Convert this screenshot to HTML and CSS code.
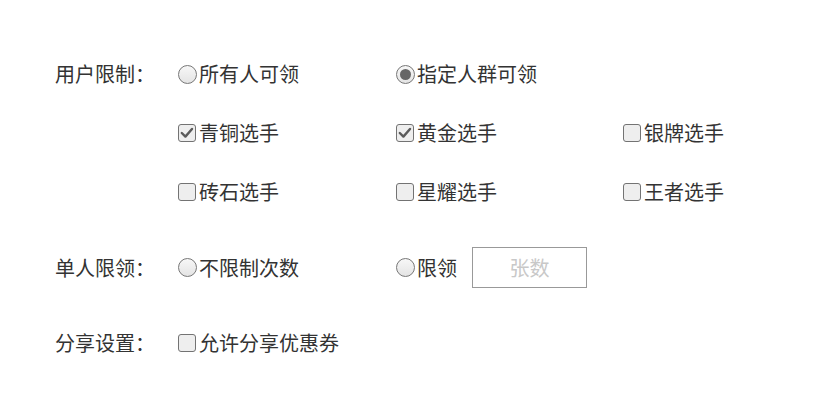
FILE: index.html
```html
<!DOCTYPE html>
<html lang="zh-CN">
<head>
<meta charset="utf-8">
<title>优惠券设置</title>
<link rel="stylesheet" href="styles.css">
</head>
<body>
<div class="form">
  <div class="row row-top">
    <div class="label">用户限制：</div>
    <div class="options">
      <label class="opt"><span class="radio"></span><span class="txt">所有人可领</span></label>
      <label class="opt"><span class="radio checked"></span><span class="txt">指定人群可领</span></label>
      <span></span>
      <label class="opt"><span class="check checked"><svg viewBox="0 0 18 18" width="18" height="18"><path d="M3.8 9 L7.4 12.6 L14 5" fill="none" stroke="#5a5a5a" stroke-width="2.4" stroke-linecap="round" stroke-linejoin="round"/></svg></span><span class="txt">青铜选手</span></label>
      <label class="opt"><span class="check checked"><svg viewBox="0 0 18 18" width="18" height="18"><path d="M3.8 9 L7.4 12.6 L14 5" fill="none" stroke="#5a5a5a" stroke-width="2.4" stroke-linecap="round" stroke-linejoin="round"/></svg></span><span class="txt">黄金选手</span></label>
      <label class="opt"><span class="check"></span><span class="txt">银牌选手</span></label>
      <label class="opt"><span class="check"></span><span class="txt">砖石选手</span></label>
      <label class="opt"><span class="check"></span><span class="txt">星耀选手</span></label>
      <label class="opt"><span class="check"></span><span class="txt">王者选手</span></label>
    </div>
  </div>
  <div class="row row-limit">
    <div class="label">单人限领：</div>
    <div class="options single">
      <label class="opt"><span class="radio"></span><span class="txt">不限制次数</span></label>
      <label class="opt"><span class="radio"></span><span class="txt">限领</span><input class="count" type="text" placeholder="张数"></label>
    </div>
  </div>
  <div class="row row-share">
    <div class="label">分享设置：</div>
    <div class="options single">
      <label class="opt"><span class="check"></span><span class="txt">允许分享优惠券</span></label>
    </div>
  </div>
</div>
</body>
</html>
```
FILE: styles.css
```css
html, body {
  margin: 0;
  padding: 0;
  background: #fff;
}
body {
  font-family: "Microsoft YaHei", "Noto Sans CJK SC", "Noto Sans", sans-serif;
  font-size: 20px;
  color: #333;
}
.form {
  padding: 59px 0 0 55px;
}
.row {
  display: flex;
  align-items: center;
}
.row-top {
  align-items: flex-start;
}
.label {
  width: 123px;
  line-height: 30px;
  white-space: nowrap;
}
.options {
  display: grid;
  grid-template-columns: 218px 227px auto;
  grid-auto-rows: 30px;
  row-gap: 29px;
}
.options.single {
  grid-auto-rows: 41px;
}
.row-limit {
  margin-top: 40px;
}
.row-share {
  margin-top: 40px;
}
.row-share .options.single {
  grid-auto-rows: 30px;
}
.opt {
  display: flex;
  align-items: center;
  line-height: 30px;
  white-space: nowrap;
}
.txt {
  margin-left: 2px;
}
.radio {
  box-sizing: border-box;
  width: 19px;
  height: 19px;
  border-radius: 50%;
  border: 1px solid #777;
  background: linear-gradient(#f7f7f7, #e4e4e4);
  display: flex;
  align-items: center;
  justify-content: center;
  flex: none;
}
.radio.checked::after {
  content: "";
  width: 11px;
  height: 11px;
  border-radius: 50%;
  background: #666;
}
.check {
  box-sizing: border-box;
  width: 18px;
  height: 18px;
  margin: 0 1px 0 0;
  border-radius: 3px;
  border: 1.5px solid #737373;
  background: #eee;
  flex: none;
  display: flex;
  align-items: center;
  justify-content: center;
  overflow: hidden;
}
.check svg {
  display: block;
  flex: none;
}
.count {
  box-sizing: border-box;
  width: 115px;
  height: 41px;
  margin-left: 15px;
  border: 1px solid #999;
  border-radius: 0;
  padding: 0;
  font: inherit;
  font-size: 20px;
  text-align: center;
  color: #333;
  outline: none;
}
.count::placeholder {
  color: #c8c8c8;
}
```
